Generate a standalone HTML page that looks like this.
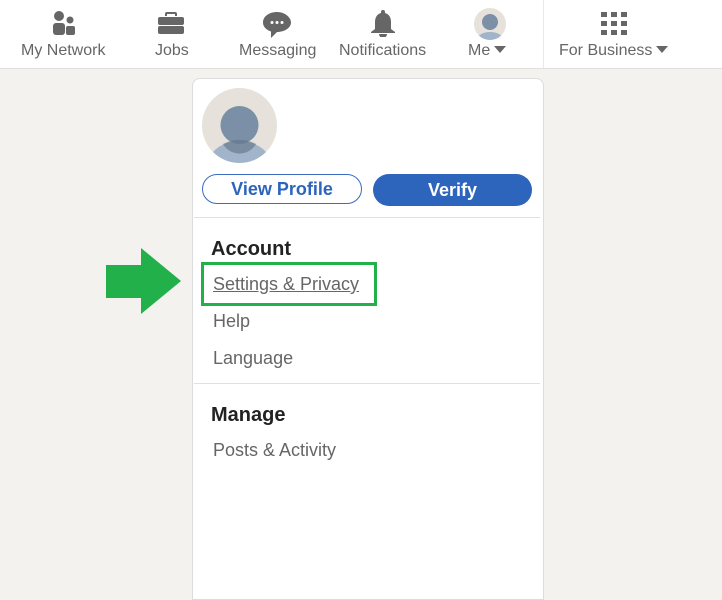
<!DOCTYPE html>
<html><head><style>
body{margin:0;width:722px;height:572px;background:#f3f2ef;font-family:"Liberation Sans",sans-serif;position:relative;overflow:hidden}
.hdr{position:absolute;left:0;top:0;width:722px;height:68px;background:#fff;border-bottom:1px solid #e0dfdc}
.it{position:absolute;top:42px;font-size:16px;color:#666;text-align:center}
.sep{position:absolute;left:543px;top:0;width:1px;height:68px;background:#e8e8e8}
.tri{display:inline-block;width:0;height:0;border-left:6px solid transparent;border-right:6px solid transparent;border-top:7px solid #666;margin-left:4px;vertical-align:2px}
.panel{position:absolute;left:192px;top:78px;width:350px;height:520px;background:#fff;border:1px solid #dcdcdc;border-radius:8px 8px 0 0}
.btn{position:absolute;top:174px;height:30px;border-radius:16px;font-weight:bold;font-size:18px;text-align:center;line-height:30px}
.lnk{position:absolute;left:213px;font-size:18px;color:#666}
.h{position:absolute;left:211px;font-size:20px;font-weight:bold;color:#222}
</style></head><body>
<div class="hdr">
<svg style="position:absolute;left:51px;top:10px" width="26" height="26" viewBox="0 0 26 26" fill="#666"><circle cx="8" cy="6" r="5"/><rect x="2" y="13" width="12" height="12" rx="3"/><circle cx="19" cy="10" r="3.5"/><rect x="15" y="16" width="9" height="9" rx="2"/></svg>
<svg style="position:absolute;left:157px;top:9px" width="28" height="26" viewBox="0 0 28 26" fill="#666"><path d="M10 3h8a2 2 0 0 1 2 2v2h-2V5h-8v2H8V5a2 2 0 0 1 2-2z"/><rect x="1" y="8" width="26" height="8" rx="2"/><rect x="1" y="17" width="26" height="8" rx="2"/></svg>
<svg style="position:absolute;left:262px;top:11px" width="30" height="28" viewBox="0 0 30 28" fill="#666"><path d="M15 1C7 1 1 5.5 1 11.5 1 16 4.5 19 9 20.5V27l6-6h0c8 0 14-4.5 14-9.5S23 1 15 1z"/><circle cx="10" cy="11.5" r="1.5" fill="#fff"/><circle cx="15" cy="11.5" r="1.5" fill="#fff"/><circle cx="20" cy="11.5" r="1.5" fill="#fff"/></svg>
<svg style="position:absolute;left:369px;top:9px" width="28" height="28" viewBox="0 0 28 28" fill="#666"><path d="M14 1a2 2 0 0 1 2 2v1c4 1 6 4.5 6 9v7l4 3v1H2v-1l4-3v-7c0-4.5 2-8 6-9V3a2 2 0 0 1 2-2z"/><path d="M10 25h8a4 4 0 0 1-8 0z"/></svg>
<svg style="position:absolute;left:474px;top:8px" width="32" height="32" viewBox="0 0 32 32"><defs><clipPath id="c"><circle cx="16" cy="16" r="16"/></clipPath></defs><g clip-path="url(#c)"><rect width="32" height="32" fill="#e6e2db"/><circle cx="16" cy="14" r="8" fill="#7b8fa6"/><ellipse cx="16" cy="33" rx="14" ry="9" fill="#a1b4c9"/></g></svg>
<svg style="position:absolute;left:601px;top:12px" width="26" height="24" viewBox="0 0 26 24" fill="#666"><rect x="0" y="0" width="6" height="5"/><rect x="10" y="0" width="6" height="5"/><rect x="20" y="0" width="6" height="5"/><rect x="0" y="9" width="6" height="5"/><rect x="10" y="9" width="6" height="5"/><rect x="20" y="9" width="6" height="5"/><rect x="0" y="18" width="6" height="5"/><rect x="10" y="18" width="6" height="5"/><rect x="20" y="18" width="6" height="5"/></svg>
<div class="it" style="left:21px">My Network</div>
<div class="it" style="left:155px">Jobs</div>
<div class="it" style="left:239px">Messaging</div>
<div class="it" style="left:339px">Notifications</div>
<div class="it" style="left:468px">Me<span class="tri"></span></div>
<div class="sep"></div>
<div class="it" style="left:559px">For Business<span class="tri"></span></div>
</div>
<div class="panel"></div>
<svg style="position:absolute;left:202px;top:88px" width="75" height="75" viewBox="0 0 75 75"><defs><clipPath id="d"><circle cx="37.5" cy="37.5" r="37.5"/></clipPath></defs><g clip-path="url(#d)"><rect width="75" height="75" fill="#e6e2db"/><ellipse cx="37.5" cy="78" rx="32" ry="25" fill="#a1b4c9"/><circle cx="37.5" cy="37" r="19" fill="#7b8fa6"/><path d="M21 56a30 25 0 0 1 33 0a19 19 0 0 1-33 0z" fill="#5f7186" opacity=".6"/></g></svg>
<div class="btn" style="left:202px;width:158px;border:1.5px solid #3a6bc1;color:#2d64bc;height:28px;line-height:28px">View Profile</div>
<div class="btn" style="left:373px;width:159px;background:#2d64bc;color:#fff;height:32px;line-height:32px">Verify</div>
<div style="position:absolute;left:194px;top:217px;width:346px;height:1px;background:#e0e0e0"></div>
<div class="h" style="top:238px">Account</div>
<div class="lnk" style="top:274px;text-decoration:underline">Settings &amp; Privacy</div>
<div style="position:absolute;left:201px;top:262px;width:170px;height:38px;border:3px solid #22b04b"></div>
<svg style="position:absolute;left:105px;top:248px" width="77" height="67" viewBox="0 0 77 67"><path d="M1 17h35V0l40 33-40 33V50H1z" fill="#22b04b"/></svg>
<div class="lnk" style="top:311px">Help</div>
<div class="lnk" style="top:348px">Language</div>
<div style="position:absolute;left:194px;top:383px;width:346px;height:1px;background:#e0e0e0"></div>
<div class="h" style="top:404px">Manage</div>
<div class="lnk" style="top:440px">Posts &amp; Activity</div>
</body></html>
